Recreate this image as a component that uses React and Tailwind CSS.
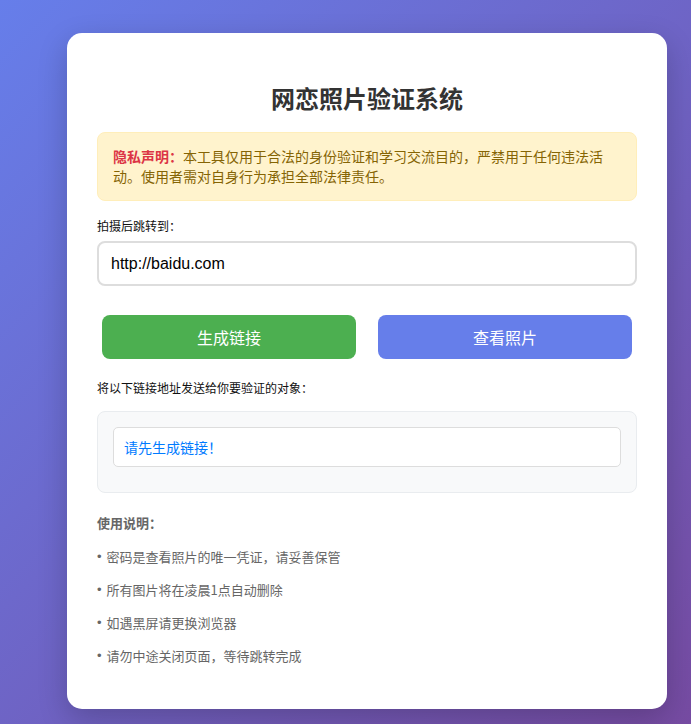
export default function App() {
  const tips = [
    "密码是查看照片的唯一凭证，请妥善保管",
    "所有图片将在凌晨1点自动删除",
    "如遇黑屏请更换浏览器",
    "请勿中途关闭页面，等待跳转完成",
  ];

  return (
    <div
      className="min-h-[724px] w-full bg-[linear-gradient(135deg,#667eea_0%,#764ba2_100%)] pt-[33px] pb-[15px]"
      style={{ fontFamily: '"Noto Sans CJK SC", "Liberation Sans", sans-serif' }}
    >
      <div className="ml-[67px] w-[600px] rounded-[15px] bg-white px-[30px] pt-[48px] pb-[43px] shadow-[0_10px_30px_rgba(0,0,0,0.2)]">
        <h1 className="text-center text-[24px] font-bold leading-[34px] text-[#333]">
          网恋照片验证系统
        </h1>

        <div className="mt-[17px] rounded-[8px] border border-[#ffeeba] bg-[#fff3cd] px-[15px] py-[14px] text-[14px] leading-[19.5px] text-[#856404]">
          <strong className="font-bold text-[#dc3545]">隐私声明：</strong>
          本工具仅用于合法的身份验证和学习交流目的，严禁用于任何违法活动。使用者需对自身行为承担全部法律责任。
        </div>

        <label className="mt-[16px] block text-[12px] leading-[18px] text-[#111]">拍摄后跳转到：</label>
        <input
          type="text"
          defaultValue="http://baidu.com"
          className="mt-[6px] block h-[45px] w-full rounded-[8px] border-2 border-[#ddd] px-[12px] text-[16px] text-black outline-none"
          style={{ fontFamily: '"Liberation Sans", Arial, sans-serif' }}
        />

        <div className="mt-[29px] flex justify-between px-[5px]">
          <button className="h-[44px] w-[254px] rounded-[8px] bg-[#4caf50] text-[16px] text-white">
            生成链接
          </button>
          <button className="h-[44px] w-[254px] rounded-[8px] bg-[#667eea] text-[16px] text-white">
            查看照片
          </button>
        </div>

        <label className="mt-[20px] block text-[12px] leading-[18px] text-[#111]">
          将以下链接地址发送给你要验证的对象：
        </label>

        <div className="mt-[14px] rounded-[8px] border border-[#e9ecef] bg-[#f8f9fa] px-[15px] pt-[15px] pb-[25px]">
          <div className="flex h-[40px] items-center rounded-[5px] border border-[#ddd] bg-white px-[10px] text-[14px] text-[#007bff]">
            请先生成链接！
          </div>
        </div>

        <div className="mt-[20px] text-[13px] text-[#666]">
          <p className="font-bold leading-[20px]">使用说明：</p>
          <ul className="mt-[14px] flex flex-col gap-[13px]">
            {tips.map((t) => (
              <li key={t} className="flex h-[20px] items-center leading-[20px]">
                <span className="mr-[5px] font-['Liberation_Sans',Arial,sans-serif]">•</span>
                <span>{t}</span>
              </li>
            ))}
          </ul>
        </div>
      </div>
    </div>
  );
}
